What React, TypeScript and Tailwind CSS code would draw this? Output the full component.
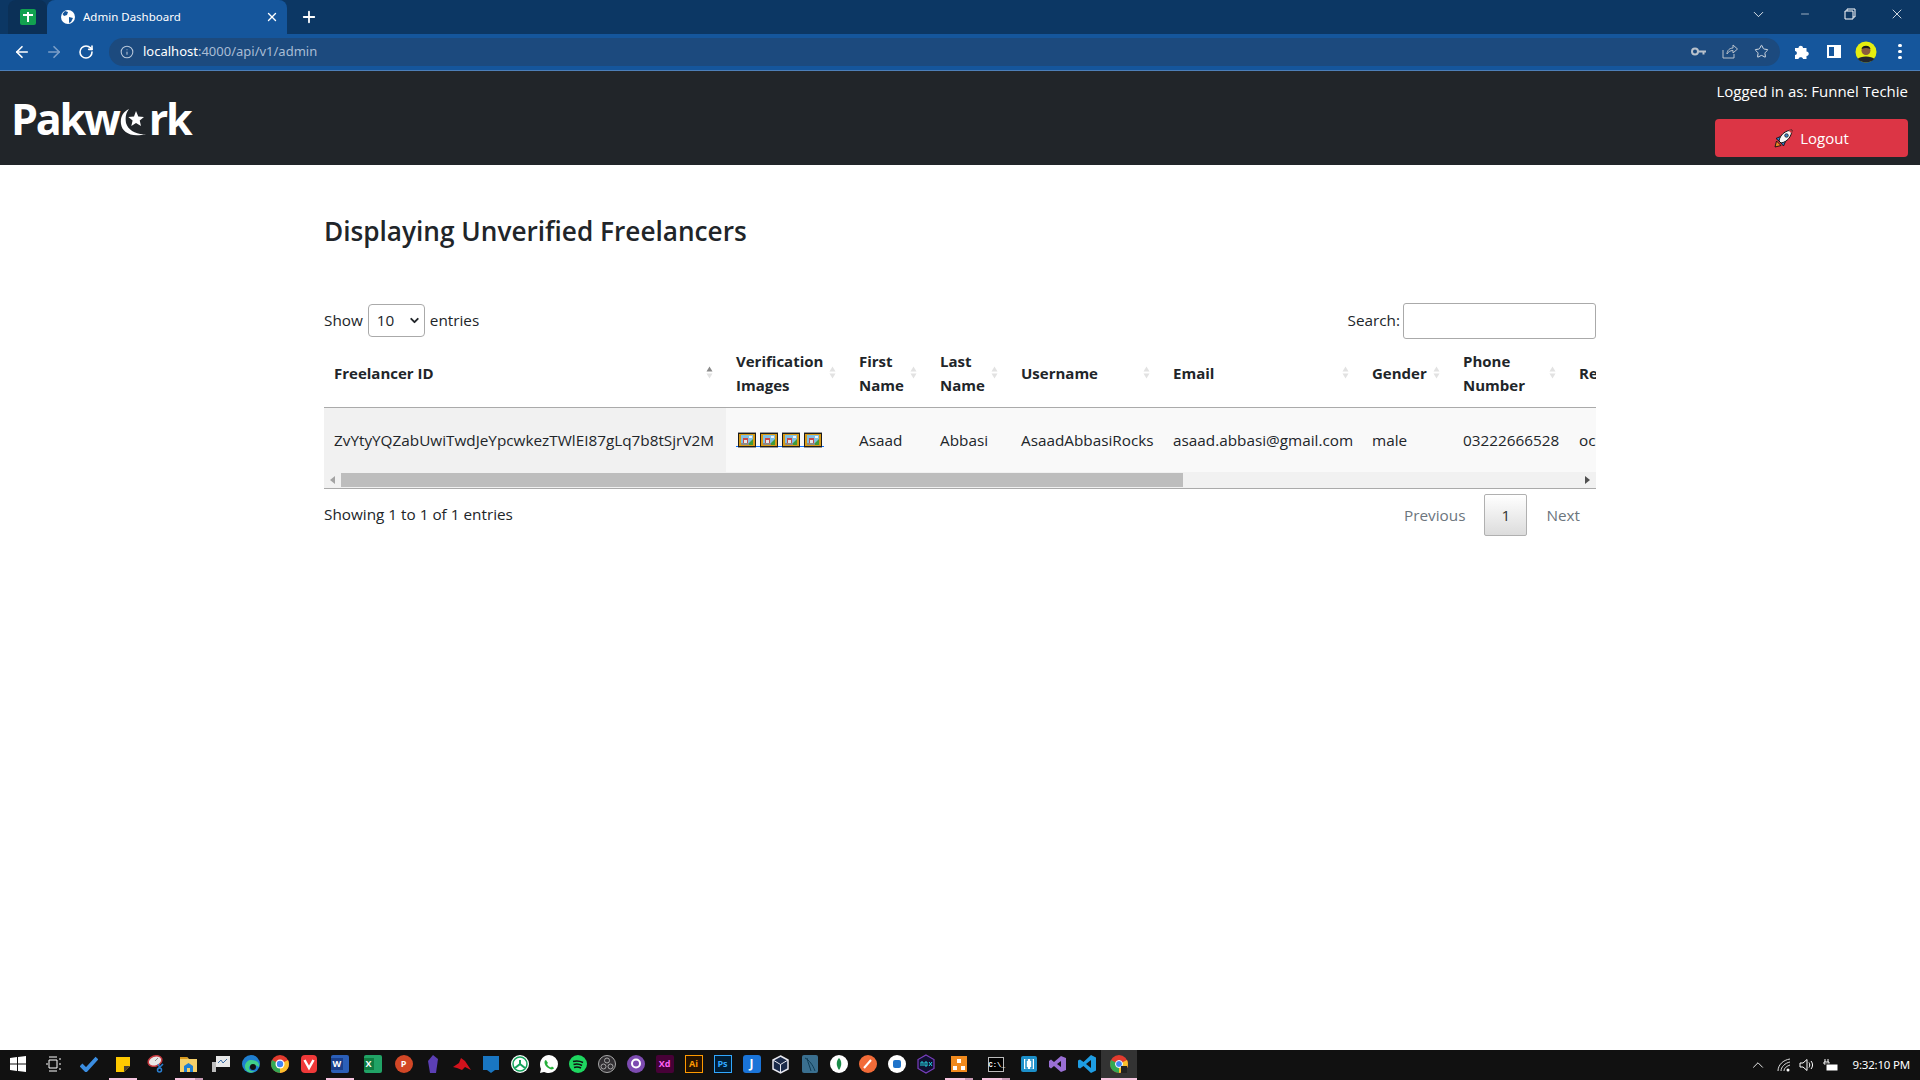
import { ArrowLeft, ArrowRight, ChevronDown, ChevronUp, Info, Minus, Plus, RotateCw, Star, X } from 'lucide-react';

const font = "font-['Open_Sans','Noto_Sans',sans-serif]";
const textCell = 'pl-[10px] pt-[2px]';

const columns = [
  { w: 'w-[402px]', label: ['Freelancer ID'], active: true },
  { w: 'w-[123px]', label: ['Verification', 'Images'] },
  { w: 'w-[81px]', label: ['First', 'Name'] },
  { w: 'w-[81px]', label: ['Last', 'Name'] },
  { w: 'w-[152px]', label: ['Username'] },
  { w: 'w-[199px]', label: ['Email'] },
  { w: 'w-[91px]', label: ['Gender'] },
  { w: 'w-[116px]', label: ['Phone', 'Number'] },
  { w: 'w-[150px]', label: ['Residence'] },
];

function SortArrows({ active }: { active?: boolean }) {
  return (
    <svg width="7" height="13" viewBox="0 0 7 13" className="shrink-0">
      <path d="M3.5 0.5 6.5 5.5H0.5Z" fill={active ? '#8a8a8a' : '#e2e2e2'} />
      <path d="M3.5 12.5 6.5 7.5H0.5Z" fill="#e2e2e2" />
    </svg>
  );
}

function PictureIcon() {
  return (
    <svg width="18" height="16" viewBox="0 0 18 16" className="relative block">
      <rect x="0" y="0" width="18" height="16" fill="#9a9a9a" />
      <rect x="0" y="1" width="18" height="14" fill="#1c1c1c" />
      <rect x="1" y="2" width="16" height="12" fill="#d89a14" />
      <rect x="3" y="3" width="12" height="10" fill="#7fc0e4" />
      <path d="M9 13 15 7V13Z" fill="#3f9b3a" />
      <rect x="3" y="11" width="8" height="2" fill="#8a8a8a" />
      <rect x="5" y="6" width="5" height="5" fill="#c9494a" />
      <rect x="6" y="8" width="3" height="3" fill="#e8e8e8" />
      <rect x="11" y="4" width="3" height="2" fill="#f2f2f2" />
    </svg>
  );
}

function Rocket() {
  return (
    <svg width="19" height="19" viewBox="0 0 19 19">
      <path d="M1 18 2.500 12 7 16.500Z" fill="#f08a24" stroke="#111" strokeWidth="0.9" />
      <path d="M2 9.500 6.500 7.500 11.500 12.500 9.500 17 7 14 5 12Z" fill="#2f7fd0" stroke="#111" strokeWidth="0.9" />
      <path d="M5 12C6 6 11 1.500 18 1 17.500 8 13 13 7 14Z" fill="#f6f6f6" stroke="#111" strokeWidth="1" />
      <circle cx="12.500" cy="6.500" r="1.800" fill="#3b82c4" stroke="#111" strokeWidth="0.7" />
      <path d="M14.500 1.500 17.800 1.200 17.500 4.500Z" fill="#d8343c" />
    </svg>
  );
}

function Logo() {
  return (
    <div className="ml-[-1px] flex items-end text-[43px] font-bold leading-none tracking-[-2.200px] text-white">
      <span>Pakw</span>
      <svg width="28" height="30" viewBox="0 0 28 30" className="mb-[3px] ml-[1px] mr-[1px]">
        <path d="M9 2C3 5 0 10 1 17 2 25 11 31 26 27 16 28 8 23 6 16 5 10 6 6 9 2Z" fill="#fff" />
        <path d="M16 4 18.300 9.500 24 10 19.700 13.500 21 19 16 16 11.300 19 12.600 13.500 8.300 10 14 9.500Z" fill="#fff" />
      </svg>
      <span>rk</span>
    </div>
  );
}

function BrowserChrome() {
  return (
    <div className="text-white">
      <div className="flex h-[34px] bg-[#0c3764]">
        <div className="ml-[8px] flex h-[34px] w-[39px] items-center justify-center rounded-t-lg bg-[#0b3057]">
          <div className="relative size-4 rounded-[2px] bg-[#12a150]">
            <div className="absolute left-[7px] top-[3px] h-[10px] w-[2px] bg-white" />
            <div className="absolute left-[3px] top-[5px] h-[2px] w-[10px] bg-white" />
          </div>
        </div>
        <div className="flex h-[34px] w-[240px] items-center rounded-t-lg bg-[#15569c] pl-[13px] pr-[8px]">
          <svg width="16" height="16" viewBox="0 0 16 16" className="shrink-0">
            <circle cx="8" cy="8" r="7" fill="#fff" />
            <path d="M5 2 8 3 7 6 4 7 2.500 5ZM9 8 13 9 11 13 9 14Z" fill="#15569c" />
          </svg>
          <span className="ml-[7px] flex-1 font-['Noto_Sans',sans-serif] text-[11.500px]">Admin Dashboard</span>
          <X size={14} strokeWidth={2.4} />
        </div>
        <div className="ml-[7px] flex h-[34px] w-[30px] items-center justify-center">
          <Plus size={18} strokeWidth={2.4} />
        </div>
        <div className="flex-1" />
        <div className="flex h-[28px] items-center">
          <ChevronDown size={17} strokeWidth={1.2} className="mr-[32px]" />
          <Minus size={12} strokeWidth={1.2} className="mr-[33px]" />
          <svg width="12" height="12" viewBox="0 0 12 12" className="mr-[33px]">
            <path d="M3 3V1H11V9H9M1 3H9V11H1Z" fill="none" stroke="#fff" strokeWidth="1" />
          </svg>
          <X size={16} strokeWidth={1.2} className="mr-[15px]" />
        </div>
      </div>
      <div className="flex h-[37px] items-center border-b border-[#4d7fb8] bg-[#15569c] pb-[1px]">
        <ArrowLeft size={18} strokeWidth={2.2} className="ml-[13px] shrink-0" />
        <ArrowRight size={18} strokeWidth={2.2} className="ml-[14px] shrink-0 text-[#7c9fc8]" />
        <RotateCw size={16} strokeWidth={2.4} className="ml-[15px] shrink-0" />
        <div className="ml-[15px] flex h-[28px] w-[1671px] shrink-0 items-center rounded-full bg-[#1c4a7e] pl-[11px] pr-[11px]">
          <Info size={14} strokeWidth={1.8} className="text-[#b8c7da]" />
          <span className="ml-[9px] flex-1 font-['Noto_Sans',sans-serif] text-[13px]">
            localhost<span className="text-[#a9bdd5]">:4000/api/v1/admin</span>
          </span>
          <svg width="15" height="9" viewBox="0 0 15 9" className="mr-[16px]">
            <circle cx="4" cy="4.500" r="3" fill="none" stroke="#b9c2cc" strokeWidth="2" />
            <path d="M7 3.500H15V5.500H13.500V7.500H11.500V5.500H7Z" fill="#b9c2cc" />
          </svg>
          <svg width="16" height="15" viewBox="0 0 16 15" className="mr-[16px]">
            <path d="M1 6V14H12V10M5 10C5 6 8 4 11 4V1L15.500 5 11 9V6.500C8 6.500 6 8 5 10Z" fill="none" stroke="#b9c2cc" strokeWidth="1" />
          </svg>
          <Star size={15} strokeWidth={1.6} className="text-[#d5dce4]" />
        </div>
        <svg width="15" height="15" viewBox="0 0 15 15" className="ml-[14px] shrink-0">
          <path d="M1 4H4.500C4.500 1 9 1 9 4H12.500V7.500C15.500 7.500 15.500 12 12.500 12V15H9C9 12.500 4.500 12.500 4.500 15H1V11C3.500 11 3.500 7 1 7Z" fill="#fff" />
        </svg>
        <div className="ml-[18px] h-[13px] w-[14px] shrink-0 border-[2px] border-white bg-[linear-gradient(to_right,transparent_50%,#fff_50%)]" />
        <svg width="22" height="22" viewBox="0 0 22 22" className="ml-[14px] shrink-0">
          <circle cx="11" cy="11" r="10.500" fill="#e6ee10" />
          <path d="M2.500 18C5 14.500 17 14.500 19.500 18 15 22.500 7 22.500 2.500 18Z" fill="#23262b" />
          <circle cx="11" cy="9.500" r="4.500" fill="#8a5c3e" />
          <path d="M6.500 8C7 3.500 15 3.500 15.500 8 12 6.500 10 6.500 6.500 8Z" fill="#1a1a1a" />
        </svg>
        <div className="ml-[21px] flex shrink-0 flex-col gap-[2.500px]">
          <div className="size-[3.500px] rounded-full bg-white" />
          <div className="size-[3.500px] rounded-full bg-white" />
          <div className="size-[3.500px] rounded-full bg-white" />
        </div>
      </div>
    </div>
  );
}

function Glyph({ bg, children, round, color = '#fff' }: { bg: string; children?: string; round?: boolean; color?: string }) {
  return (
    <div
      className={`flex size-[18px] items-center justify-center text-[9px] font-bold ${round ? 'rounded-full' : 'rounded-[2px]'}`}
      style={{ background: bg, color }}
    >
      {children}
    </div>
  );
}

const taskbarItems = [
  { w: 36, node: <svg width="16" height="16" viewBox="0 0 16 16"><path d="M0 2 7 1V7.500H0ZM8 1 16 0V7.500H8ZM0 8.500H7V15L0 14ZM8 8.500H16V16L8 15Z" fill="#fff" /></svg> },
  { w: 35, node: <svg width="16" height="16" viewBox="0 0 16 16"><path d="M3 1H11M3 15H11M3 4H11V12H3ZM0 8H2M13 3H15M13 8H15M13 13H15" stroke="#fff" fill="none" /></svg> },
  { w: 35, node: <svg width="18" height="16" viewBox="0 0 18 16"><path d="M1 9 6 14 17 2" stroke="#3b8de0" strokeWidth="4" fill="none" /></svg> },
  { w: 33, on: 1, node: <svg width="14" height="15" viewBox="0 0 14 15"><path d="M0 0H14V9L8 15H0Z" fill="#ffc900" /><path d="M8 15V9H14Z" fill="#4a4030" /></svg> },
  { w: 33, node: <svg width="18" height="18" viewBox="0 0 18 18"><ellipse cx="8" cy="6" rx="7" ry="5" fill="#e8e8e8" stroke="#c5383e" strokeWidth="1.500" transform="rotate(-20 8 6)" /><path d="M8 6 11 3" stroke="#888" /><circle cx="12.500" cy="15" r="2" fill="none" stroke="#2a7fd0" strokeWidth="1.500" /><path d="M11 9 13 13M16 9 11 14" stroke="#2a7fd0" strokeWidth="1.500" /></svg> },
  { w: 33, on: 2, node: <svg width="17" height="15" viewBox="0 0 17 15"><path d="M0 0H7L9 2H17V15H0Z" fill="#f5d06a" /><path d="M0 0H7L8 2H0Z" fill="#d99a1e" /><path d="M4 15V9L8.500 6 13 9V15H10V11H7V15Z" fill="#1f7fd4" /></svg> },
  { w: 31, node: <svg width="18" height="16" viewBox="0 0 18 16"><rect x="4" y="0" width="14" height="11" fill="#e8e8e8" /><path d="M6 7 9 4 11 7 15 3" stroke="#3b6ea8" fill="none" /><rect x="0" y="6" width="4" height="10" fill="#bbb" /></svg> },
  { w: 29, node: <svg width="18" height="18" viewBox="0 0 18 18"><circle cx="9" cy="9" r="9" fill="#1f7fd0" /><path d="M9 5C13 5 18 7 17 12 15 10 9 9 7 12 6 15 10 17 13 16 8 20 2 16 3 10 4 7 6 5 9 5Z" fill="#40d08a" /><circle cx="11" cy="12" r="3" fill="#111" /></svg> },
  { w: 29, node: <svg width="18" height="18" viewBox="0 0 18 18"><circle cx="9" cy="9" r="9" fill="#e33b2e" /><path d="M9 9 17 5A9 9 0 0 1 9 18Z" fill="#fbc02d" /><path d="M9 9 9 18A9 9 0 0 1 1 5Z" fill="#34a853" /><circle cx="9" cy="9" r="4.500" fill="#fff" /><circle cx="9" cy="9" r="3.200" fill="#4285f4" /></svg> },
  { w: 29, node: <svg width="16" height="18" viewBox="0 0 16 18"><rect width="16" height="18" rx="4" fill="#ef3939" /><path d="M3.500 5 8 13 12.500 5" stroke="#fff" strokeWidth="2.500" fill="none" /></svg> },
  { w: 33, on: 1, node: <div className="flex h-[18px] w-[18px] items-center justify-start rounded-[2px] bg-[#2b5fb8]"><span className="bg-[#1a3f8a] px-[2px] text-[9px] font-bold leading-[12px] text-white">W</span></div> },
  { w: 33, node: <div className="flex h-[18px] w-[18px] items-center justify-start rounded-[2px] bg-[#21a366]"><span className="bg-[#107c41] px-[2px] text-[9px] font-bold leading-[12px] text-white">X</span></div> },
  { w: 29, node: <Glyph bg="#d24726" round>P</Glyph> },
  { w: 29, node: <svg width="10" height="18" viewBox="0 0 10 18"><path d="M5 0 10 4 8 18 2 18 0 6Z" fill="#5c3fb5" /></svg> },
  { w: 29, node: <svg width="18" height="13" viewBox="0 0 18 13"><path d="M0 9 6 5 8 0 12 3 18 12 12 9 9 12 4 10Z" fill="#d3121c" /></svg> },
  { w: 29, node: <svg width="16" height="17" viewBox="0 0 16 17"><rect width="16" height="14" fill="#1976c2" /><path d="M4 14H12L8 17Z" fill="#1976c2" /></svg> },
  { w: 29, node: <svg width="18" height="18" viewBox="0 0 18 18"><circle cx="9" cy="9" r="9" fill="#fff" /><path d="M9 5V9L4 13M9 9 14 13" stroke="#14a35c" strokeWidth="2" fill="none" /><circle cx="9" cy="9" r="7" fill="none" stroke="#14a35c" strokeWidth="1.500" /></svg> },
  { w: 29, node: <svg width="18" height="18" viewBox="0 0 18 18"><path d="M9 0A9 9 0 0 1 9 18C7 18 5 17.500 4 17L0 18 1 14C-2 8 2 0 9 0Z" fill="#fff" /><path d="M6 5 8 8 7 9C8 11 9 12 11 12.500L12 11.500 14 13C13 15 11 14.500 9 13.500 6 12 4.500 9.500 4.500 7.500 4.500 6 5 5 6 5Z" fill="#25b03a" /></svg> },
  { w: 29, node: <svg width="18" height="18" viewBox="0 0 18 18"><circle cx="9" cy="9" r="9" fill="#1ed760" /><path d="M4 6.500C8 5.500 11 6 14 7.500M4.500 9.500C8 8.500 10.500 9 13 10.500M5 12.500C8 11.500 10 12 12 13" stroke="#111" strokeWidth="1.500" fill="none" /></svg> },
  { w: 29, node: <svg width="18" height="18" viewBox="0 0 18 18"><circle cx="9" cy="9" r="8.500" fill="#302e31" stroke="#aaa" /><circle cx="9" cy="5.500" r="2.500" fill="none" stroke="#aaa" /><circle cx="5.500" cy="11.500" r="2.500" fill="none" stroke="#aaa" /><circle cx="12.500" cy="11.500" r="2.500" fill="none" stroke="#aaa" /></svg> },
  { w: 29, node: <svg width="18" height="18" viewBox="0 0 18 18"><circle cx="9" cy="9" r="9" fill="#7d4bb0" /><circle cx="9" cy="8.500" r="5" fill="#fff" /><circle cx="9" cy="8.500" r="3" fill="#7d4bb0" /></svg> },
  { w: 29, node: <Glyph bg="#470137" color="#ff61f6">Xd</Glyph> },
  { w: 29, node: <div className="flex size-[18px] items-center justify-center border border-[#ff9a00] bg-[#261300] text-[9px] font-bold text-[#ff9a00]">Ai</div> },
  { w: 29, node: <div className="flex size-[18px] items-center justify-center border border-[#31a8ff] bg-[#001e36] text-[9px] font-bold text-[#31a8ff]">Ps</div> },
  { w: 29, node: <div className="flex size-[18px] items-center justify-center rounded-[3px] bg-[#1a74d8] text-[12px] font-bold text-white">J</div> },
  { w: 29, node: <svg width="17" height="19" viewBox="0 0 17 19"><path d="M8.500 1 16 5V14L8.500 18 1 14V5Z" fill="#1b2b4a" stroke="#e8e8f0" strokeWidth="1.500" /><path d="M1 5 8.500 9.500 16 5M8.500 9.500V18" stroke="#e8e8f0" fill="none" /></svg> },
  { w: 29, node: <svg width="16" height="18" viewBox="0 0 16 18"><rect width="16" height="18" rx="2" fill="#3a6f8f" /><path d="M3 3C7 5 11 10 13 16M5 3C6 8 8 12 9 16" stroke="#0f3c55" fill="none" /></svg> },
  { w: 29, node: <svg width="18" height="18" viewBox="0 0 18 18"><circle cx="9" cy="9" r="9" fill="#fff" /><path d="M9 3C12 6 12 11 9 15 6 11 6 6 9 3Z" fill="#1a8c4a" /></svg> },
  { w: 29, node: <svg width="18" height="18" viewBox="0 0 18 18"><circle cx="9" cy="9" r="9" fill="#f26b38" /><path d="M5 13 12 5" stroke="#fff" strokeWidth="2" /></svg> },
  { w: 29, node: <svg width="18" height="18" viewBox="0 0 18 18"><circle cx="9" cy="9" r="9" fill="#fff" /><rect x="5" y="5" width="8" height="8" rx="2" fill="#1f73c9" /></svg> },
  { w: 29, node: <svg width="18" height="20" viewBox="0 0 18 20"><path d="M9 1 17 5.500V14.500L9 19 1 14.500V5.500Z" fill="#101030" stroke="#7a3fc0" strokeWidth="1.200" /><path d="M4 12V8H6V12M8 8H10V12H8ZM12 8 15 12M15 8 12 12" stroke="#25d3e0" fill="none" /></svg> },
  { w: 37, on: 2, node: <svg width="16" height="16" viewBox="0 0 16 16"><rect width="16" height="16" fill="#f08a1d" /><path d="M6 3H10V7H6ZM2 10H6V14H2ZM10 10H14V14H10Z" fill="#fff" /></svg> },
  { w: 37, on: 2, node: <div className="h-[15px] w-[16px] border border-[#bbb] bg-black pt-[2px] text-center font-['Liberation_Mono',monospace] text-[7px] font-bold leading-[10px] text-white">C:\_</div> },
  { w: 29, node: <svg width="16" height="16" viewBox="0 0 16 16"><rect width="16" height="16" rx="2" fill="#1c8fc9" /><rect x="3" y="3" width="10" height="10" fill="#fff" /><path d="M7 4H5V12H7M9 4H11V12H9" stroke="#1c8fc9" strokeWidth="1.500" fill="none" /></svg> },
  { w: 29, node: <svg width="18" height="18" viewBox="0 0 18 18"><path d="M12 1 17 3V15L12 17 5 11 2 13.500 0 12V6L2 4.500 5 7ZM12 6 8 9 12 12Z" fill="#9a6fd4" fillRule="evenodd" /></svg> },
  { w: 29, node: <svg width="18" height="18" viewBox="0 0 18 18"><path d="M13 0 18 2.500V15.500L13 18 5.500 11 2 13.500 0 12.500V5.500L2 4.500 5.500 7ZM13 5 8 9 13 13Z" fill="#1e9de3" fillRule="evenodd" /></svg> },
  { w: 36, on: 1, active: true, node: <svg width="18" height="18" viewBox="0 0 18 18"><circle cx="9" cy="9" r="9" fill="#e33b2e" /><path d="M9 9 17 5A9 9 0 0 1 9 18Z" fill="#fbc02d" /><path d="M9 9 9 18A9 9 0 0 1 1 5Z" fill="#34a853" /><circle cx="9" cy="9" r="3.500" fill="#4285f4" stroke="#fff" /><rect x="11" y="11" width="6" height="7" fill="#222" /></svg> },
];

function Taskbar() {
  return (
    <div className="flex h-[30px] items-stretch bg-[#111111] text-white">
      {taskbarItems.map((item, i) => (
        <div
          key={i}
          className={`flex shrink-0 flex-col items-center ${item.active ? 'bg-[#333333]' : ''}`}
          style={{ width: item.w }}
        >
          <div className="flex flex-1 items-center justify-center">{item.node}</div>
          <div
            className={`h-[2px] ${item.active ? 'w-full' : 'w-[28px]'} ${
              item.on === 1 ? 'bg-[#f6c4de]' : item.on === 2 ? 'bg-[linear-gradient(to_right,#f6c4de_70%,#c79ab4_70%)]' : ''
            }`}
          />
        </div>
      ))}
      <div className="flex-1" />
      <div className="flex items-center pr-[10px]">
        <ChevronUp size={18} strokeWidth={1.2} />
        <svg width="15" height="14" viewBox="0 0 15 14" className="ml-[10px]">
          <path d="M1 13C1 7 6 2 13 1M4 13C4 9 8 5 13 4M7 13C7 10 10 8 13 7" stroke="#ddd" fill="none" />
          <circle cx="11" cy="12" r="1.500" fill="#fff" />
        </svg>
        <svg width="16" height="14" viewBox="0 0 16 14" className="ml-[7px]">
          <path d="M1 5H4L8 1.500V12.500L4 9H1Z" stroke="#fff" fill="none" />
          <path d="M10 4.500C11 6 11 8 10 9.500M12 3C14 5.500 14 8.500 12 11" stroke="#fff" fill="none" />
        </svg>
        <svg width="16" height="13" viewBox="0 0 16 13" className="ml-[8px]">
          <path d="M2 0V3M5 0V3M1 3H6V5H1ZM3.500 5V8" stroke="#fff" fill="none" />
          <rect x="3" y="5" width="12" height="7" fill="#fff" stroke="#111" />
        </svg>
        <span className="ml-[14px] font-['Noto_Sans',sans-serif] text-[11.500px] tracking-[-0.2px]">9:32:10 PM</span>
      </div>
    </div>
  );
}

export default function App() {
  return (
    <div className={`flex h-[1080px] w-[1920px] flex-col overflow-hidden bg-white text-[15px] text-[#212529] ${font}`}>
      <BrowserChrome />
      <header className="flex h-[94px] items-center justify-between bg-[#212529] pl-[12px] pr-[12px] text-white">
        <Logo />
        <div className="flex w-[193px] flex-col items-end self-start">
          <div className="mt-[8px] whitespace-nowrap leading-[24px]">Logged in as: Funnel Techie</div>
          <button className="mt-[16px] flex h-[38px] w-full items-center justify-center gap-[7px] rounded-[4px] bg-[#dc3545] text-white">
            <Rocket />
            <span>Logout</span>
          </button>
        </div>
      </header>
      <main className="flex-1 px-[324px] text-[15.300px]">
        <h1 className="mt-[46px] text-[26.200px] font-semibold leading-[40px] text-[#212529]">Displaying Unverified Freelancers</h1>
        <div className="mt-[52px] flex h-[35px] items-center justify-between">
          <div className="flex items-center gap-[5px]">
            <span>Show</span>
            <div className="flex h-[33px] w-[57px] items-center justify-between rounded-[4px] border border-[#aaaaaa] pl-[8px] pr-[3px]">
              <span>10</span>
              <ChevronDown size={13} strokeWidth={3.5} />
            </div>
            <span>entries</span>
          </div>
          <div className="flex items-center gap-[3px]">
            <label>Search:</label>
            <input className="h-[36px] w-[193px] rounded-[3px] border border-[#aaaaaa] bg-white" />
          </div>
        </div>
        <div className="mt-[7px] overflow-hidden border-b border-[#aaaaaa]">
          <table className="w-[1395px] table-fixed border-collapse">
            <thead>
              <tr className="h-[62px] border-b border-[#aaaaaa]">
                {columns.map((c) => (
                  <th key={c.label[0]} className={`${c.w} p-0 pb-[6px] pl-[10px] pr-[13px] text-left text-[15px] font-bold leading-[24px]`}>
                    <div className="flex items-center justify-between whitespace-nowrap">
                      <div>
                        {c.label.map((l) => (
                          <div key={l}>{l}</div>
                        ))}
                      </div>
                      <SortArrows active={c.active} />
                    </div>
                  </th>
                ))}
              </tr>
            </thead>
            <tbody>
              <tr className="h-[65px] whitespace-nowrap bg-[#f9f9f9]">
                <td className={`${textCell} bg-[#f1f1f1]`}>ZvYtyYQZabUwiTwdJeYpcwkezTWlEI87gLq7b8tSjrV2M</td>
                <td className="pl-[10px]">
                  <div className="relative flex h-[16px] w-[88px] justify-between px-[2px]">
                    <div className="absolute inset-x-0 bottom-[0.500px] h-[1px] bg-[#0d6efd]" />
                    <PictureIcon />
                    <PictureIcon />
                    <PictureIcon />
                    <PictureIcon />
                  </div>
                </td>
                <td className={textCell}>Asaad</td>
                <td className={textCell}>Abbasi</td>
                <td className={textCell}>AsaadAbbasiRocks</td>
                <td className={textCell}>asaad.abbasi@gmail.com</td>
                <td className={textCell}>male</td>
                <td className={textCell}>03222666528</td>
                <td className={textCell}>occupation</td>
              </tr>
            </tbody>
          </table>
          <div className="flex h-[16px] items-center bg-[#f1f1f1]">
            <div className="flex h-[16px] w-[17px] items-center justify-center">
              <div className="border-y-[4px] border-r-[5px] border-y-transparent border-r-[#a3a3a3]" />
            </div>
            <div className="h-[14px] w-[842px] bg-[#bdbdbd]" />
            <div className="flex-1" />
            <div className="flex h-[16px] w-[17px] items-center justify-center">
              <div className="border-y-[4px] border-l-[5px] border-y-transparent border-l-[#505050]" />
            </div>
          </div>
        </div>
        <div className="mt-[5px] flex items-start justify-between">
          <div className="mt-[8px] leading-[24px]">Showing 1 to 1 of 1 entries</div>
          <div className="flex h-[42px] items-center text-[#6c757d]">
            <span>Previous</span>
            <div className="ml-[19px] flex h-[42px] w-[43px] items-center justify-center rounded-[2px] border border-[#b0b0b0] bg-[linear-gradient(to_bottom,#ffffff,#dcdcdc)] text-[#333333]">1</div>
            <span className="ml-[19px] mr-[16px]">Next</span>
          </div>
        </div>
      </main>
      <Taskbar />
    </div>
  );
}
